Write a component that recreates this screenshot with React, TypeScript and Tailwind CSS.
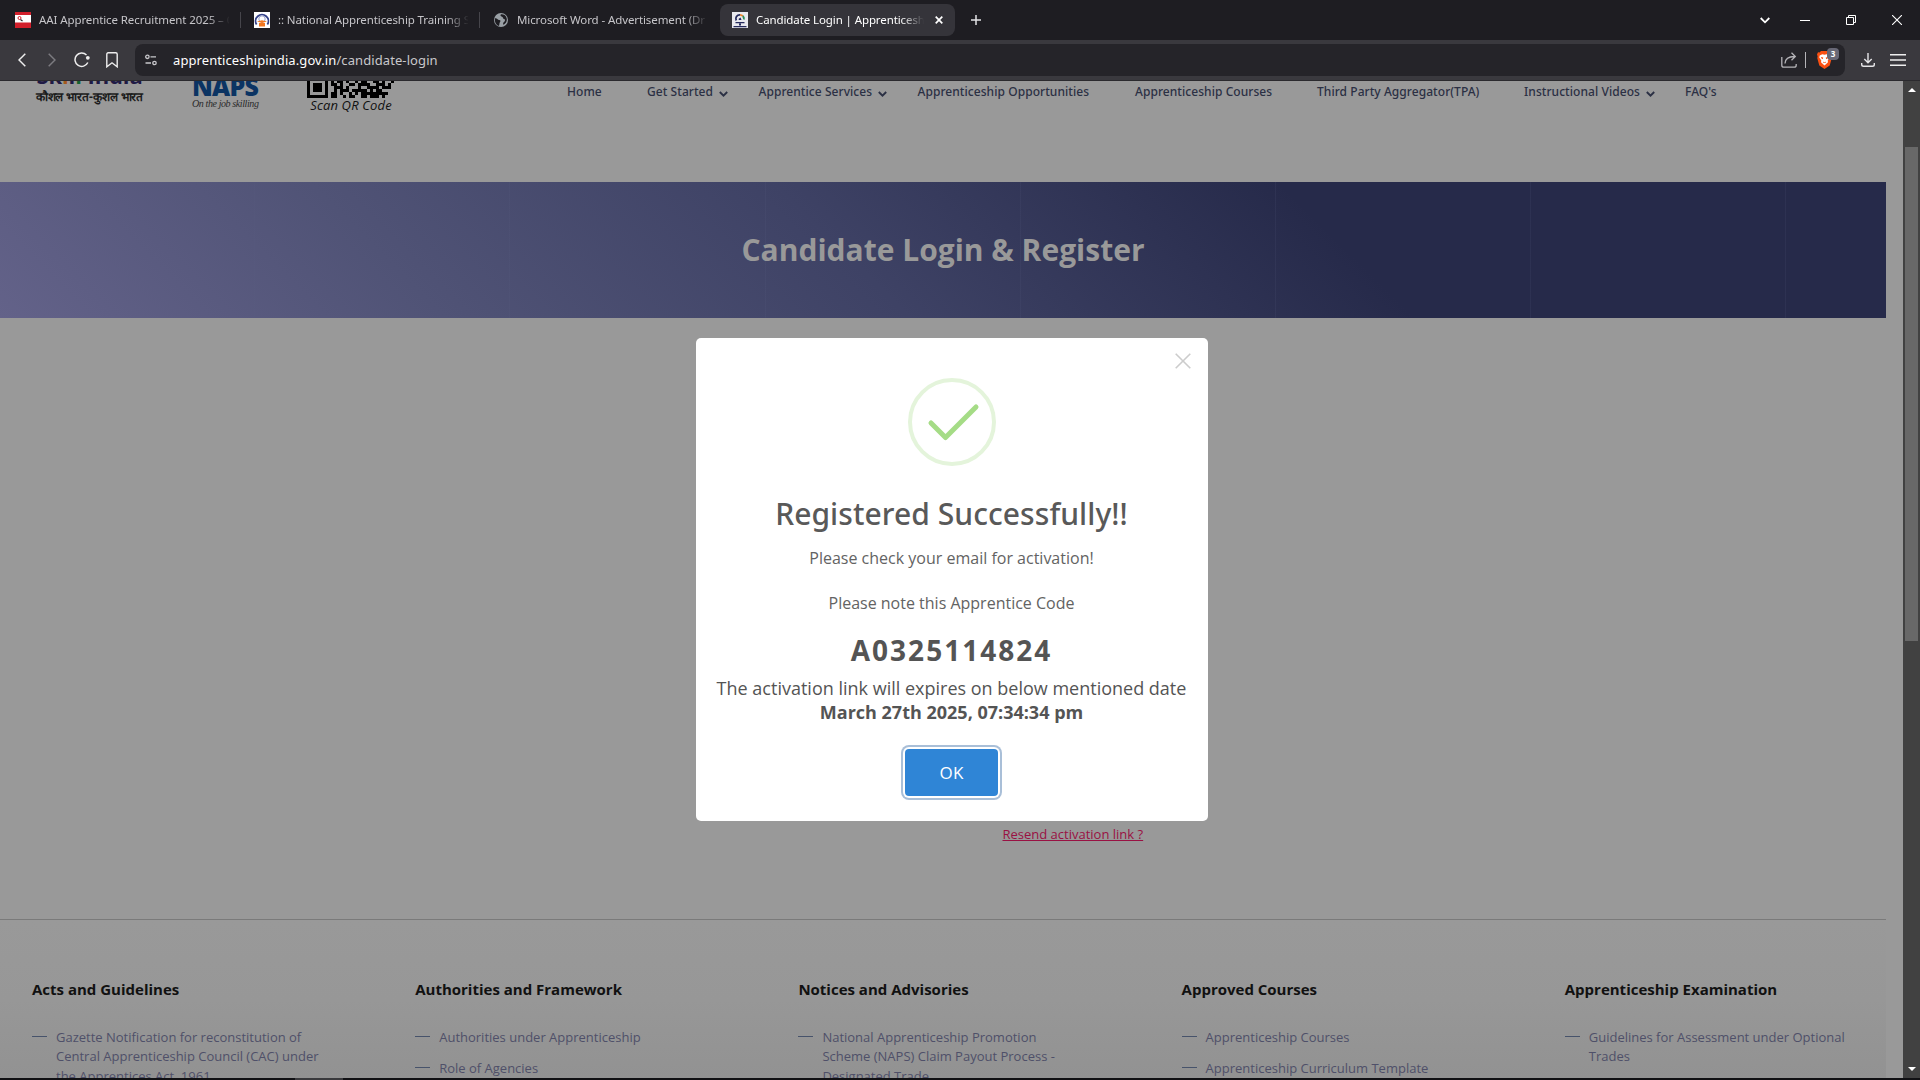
import React from 'react';
import type { ReactNode } from 'react';

const qrRows = [
  '10000010101101001011001101001',
  '10111010110100110111100111010',
  '10111010011101000100111101110',
  '10111010010111011111010110000',
  '10000010110100101011111111100',
  '11111110110010110011011101000',
];

function QrCode() {
  return (
    <svg width="88" height="17" viewBox="0 0 29.3 5.67" shapeRendering="crispEdges" className="block">
      {qrRows.map((row, y) =>
        row.split('').map((cell, x) =>
          cell === '1' ? <rect key={`${x}-${y}`} x={x} y={y - 0.33} width="1.02" height="1.02" fill="#000" /> : null,
        ),
      )}
    </svg>
  );
}

function Tab({ icon, title, children }: { icon: ReactNode; title: string; children?: ReactNode }) {
  return (
    <div className="flex h-8 w-[225px] shrink-0 items-center text-[#c6c5c9]">
      {icon}
      <span className="ml-2 w-[190px] overflow-hidden text-[11.5px] leading-4 tracking-[-0.1px] whitespace-nowrap [mask-image:linear-gradient(90deg,#000_168px,transparent_191px)]">
        {title}
      </span>
      {children}
    </div>
  );
}

function TabBar() {
  return (
    <div className="flex h-10 items-center bg-[#1e1d22] pl-[15px]">
      <Tab
        icon={
          <svg width="16" height="16" viewBox="0 0 16 16" className="shrink-0">
            <rect width="16" height="16" fill="#fff" />
            <rect width="16" height="3" fill="#d21f2b" />
            <rect y="10.5" width="16" height="5.5" fill="#d21f2b" />
            <circle cx="4.500" cy="6" r="1.500" fill="none" stroke="#d21f2b" strokeWidth="1" />
            <path d="M5.500 7.500l2 1.500" stroke="#222" strokeWidth="1.100" />
          </svg>
        }
        title="AAI Apprentice Recruitment 2025 – O"
      />
      <span className="h-4 w-px shrink-0 bg-[#46454b]" />
      <div className="w-[13px] shrink-0" />
      <Tab
        icon={
          <svg width="16" height="16" viewBox="0 0 16 16" className="shrink-0">
            <rect width="16" height="16" fill="#fff" />
            <path d="M2.6 12.5A6.4 6.4 0 1 1 13.4 12.5" fill="none" stroke="#34418a" strokeWidth="1.8" />
            <circle cx="8" cy="7" r="3.2" fill="none" stroke="#9aa3c9" />
            <path d="M3 9.5l5-1.3 5 1.3-5 1.6zM5 11h6v3.5H5z" fill="#f2761f" />
          </svg>
        }
        title=":: National Apprenticeship Training S"
      />
      <span className="h-4 w-px shrink-0 bg-[#46454b]" />
      <div className="w-[13px] shrink-0" />
      <Tab
        icon={
          <svg width="16" height="16" viewBox="0 0 16 16" className="shrink-0">
            <circle cx="8" cy="8" r="7" fill="#9aa0a6" />
            <path d="M2 6.2c2.2-.4 2.4 1.6 4.2 1.8 1.5.2 1.6 1.3.7 2.3-.7.8-.2 2.3-.9 3.6C3 13 1.400 10 2 6.200zM8 2.300c-1 1-.4 2.200 1 2.400 1.400.3.6 2 2.200 2.400 1.200.4 1 2.400-.2 3-1 .5-1 1.700-.7 2.600 2.900-1.300 4.300-4.500 3.100-7.300C12.600 3.300 10.300 2 8 2.300z" fill="#1e1d22" />
          </svg>
        }
        title="Microsoft Word - Advertisement (Dr"
      />
      <div className="ml-[2px] flex h-8 w-[235px] shrink-0 items-center rounded-lg bg-[#35343a] pl-3 text-white">
        <svg width="16" height="16" viewBox="0 0 16 16" className="shrink-0">
          <rect width="16" height="16" fill="#e9e9ee" />
          <path d="M4.200 8.500A4 4 0 0 1 8 2.800" fill="none" stroke="#252a5c" strokeWidth="1.800" />
          <path d="M8 2.800a4 4 0 0 1 2.800 1.200" fill="none" stroke="#e8822a" strokeWidth="1.800" />
          <path d="M10.800 4A4 4 0 0 1 11.900 7.500" fill="none" stroke="#2c8b57" strokeWidth="1.800" />
          <path d="M6.500 7l2-1.500L9.500 8H7zM3.500 10h9v1.200h-9zM7 11.500h2v2H7zM1.500 14h13v1.200h-13z" fill="#252a5c" />
        </svg>
        <span className="ml-2 w-[168px] overflow-hidden text-[11.5px] leading-4 tracking-[-0.1px] whitespace-nowrap [mask-image:linear-gradient(90deg,#000_145px,transparent_168px)]">
          Candidate Login | Apprenticesh
        </span>
        <svg width="8" height="8" viewBox="0 0 8 8" className="ml-[11px] shrink-0">
          <path d="M.7.7l6.600 6.600M7.300.7L.7 7.300" stroke="#fff" strokeWidth="1.700" />
        </svg>
      </div>
      <svg width="10" height="10" viewBox="0 0 10 10" className="ml-4 shrink-0">
        <path d="M5 0v10M0 5h10" stroke="#e4e4e6" strokeWidth="1.500" />
      </svg>
      <div className="ml-auto flex items-center pr-[18px]">
        <svg width="10" height="7" viewBox="0 0 10 7">
          <path d="M.7 1L5 5.300 9.300 1" fill="none" stroke="#fff" strokeWidth="1.800" />
        </svg>
        <span className="ml-[30px] h-px w-[10px] bg-white" />
        <svg width="10" height="10" viewBox="0 0 10 10" className="ml-9">
          <path d="M.5 2.500h7v7h-7zM2.500 2.500v-2h7v7h-2" fill="none" stroke="#fff" />
        </svg>
        <svg width="10" height="10" viewBox="0 0 10 10" className="ml-9">
          <path d="M0 0l10 10M10 0L0 10" stroke="#fff" strokeWidth="1.100" />
        </svg>
      </div>
    </div>
  );
}

function Toolbar() {
  return (
    <div className="flex h-[41px] items-start border-b border-[#2b2a2e] bg-[#3a393e] pt-1">
      <div className="flex h-8 w-[135px] shrink-0 items-center pl-[18px]">
        <svg width="8" height="14" viewBox="0 0 8 14">
          <path d="M7.300.7L1 7l6.300 6.300" fill="none" stroke="#eee" strokeWidth="1.500" />
        </svg>
        <svg width="8" height="14" viewBox="0 0 8 14" className="ml-[22px]">
          <path d="M.7.7L7 7 .7 13.300" fill="none" stroke="#7c7b80" strokeWidth="1.500" />
        </svg>
        <svg width="16" height="16" viewBox="0 0 16 16" className="ml-[18px]">
          <path d="M12.500 3A6.700 6.700 0 1 0 13.800 10.500" fill="none" stroke="#eee" strokeWidth="1.500" />
          <circle cx="13.800" cy="5.800" r="1.900" fill="#eee" />
        </svg>
        <svg width="12" height="16" viewBox="0 0 12 16" className="ml-4">
          <path d="M.8 2.200Q.8.800 2.200.800h7.600q1.400 0 1.400 1.400v12.600L6 10.800.8 14.800z" fill="none" stroke="#eee" strokeWidth="1.400" />
        </svg>
      </div>
      <div className="flex h-8 w-[1710px] shrink-0 items-center rounded-lg bg-[#252429] pl-[10px]">
        <svg width="12" height="12" viewBox="0 0 12 12" fill="none" stroke="#c8c7cb" strokeWidth="1.300">
          <circle cx="2.400" cy="2.800" r="1.700" />
          <path d="M5.500 2.800H11M.5 9h5.500" />
          <circle cx="9.500" cy="9" r="1.700" />
        </svg>
        <div className="ml-4 text-[13px] leading-5 tracking-[0.09px] text-white">
          apprenticeshipindia.gov.in<span className="text-[#c9c8cc]">/candidate-login</span>
        </div>
        <div className="ml-auto flex items-center pr-[6px]">
          <svg width="16" height="16" viewBox="0 0 16 16" fill="none" stroke="#b5b4b8" strokeWidth="1.300">
            <path d="M.8 5v8.200q0 2 2 2h10.400q2 0 2-2V12" />
            <path d="M4 11.500c.2-4.500 3.500-7 9.500-7M10.500.8l3.800 3.700-3.800 3.700" />
          </svg>
          <span className="ml-2 h-4 w-px bg-[#b5b4b8]" />
          <div className="relative ml-[11px] h-[18px] w-[22px]">
            <svg width="15" height="18" viewBox="0 0 15 18">
              <path d="M4 0h7l1.500 1.500L14 1.300l1 2.200-.6 1.700.3 2-2 7.300L7.500 18l-5.200-3.500-2-7.300.3-2L0 3.500l1-2.200 1.500.2z" fill="#fb5012" />
              <path d="M2.700 4.500l2.600-1.200 2.200.5 2.200-.5 2.600 1.200.4 2-2 3 .3 1.800-3.500 3.200L4 11.300l.3-1.800-2-3z" fill="#fff" />
              <path d="M4 6l2.200.6-.3 1.600L4.300 7.200zM11 6l-2.200.6.3 1.600 1.600-1zM6 10.500l1.500 1 1.500-1-.5 1.500h-2z" fill="#fb5012" />
            </svg>
            <span className="absolute top-[-3px] left-[10px] flex h-3 w-3 items-center justify-center rounded bg-[#686876] text-[8px] leading-none font-bold text-white">
              3
            </span>
          </div>
        </div>
      </div>
      <div className="flex h-8 items-center pl-4">
        <svg width="14" height="14" viewBox="0 0 14 14" fill="none" stroke="#e6e6e8" strokeWidth="1.400">
          <path d="M7 0v9.500M3.300 6L7 9.700 10.700 6M.7 10v1.500q0 1.800 1.800 1.800h9q1.800 0 1.800-1.800V10" />
        </svg>
        <svg width="16" height="12" viewBox="0 0 16 12" className="ml-[15px]">
          <path d="M0 .7h16M0 6h16M0 11.300h16" stroke="#eee" strokeWidth="1.400" />
        </svg>
      </div>
    </div>
  );
}

function NavItem({ label, menu }: { label: string; menu?: boolean }) {
  return (
    <a className="flex items-center font-medium whitespace-nowrap">
      {label}
      {menu && (
        <svg width="9" height="7" viewBox="0 0 9 7" className="mt-[4px] ml-[6px]">
          <path d="M.8 1l3.700 3.700L8.200 1" fill="none" stroke="#2b3044" strokeWidth="1.900" />
        </svg>
      )}
    </a>
  );
}

function SiteHeader() {
  return (
    <header className="flex h-[101px] shrink-0 items-start">
      <div className="flex w-[567px] shrink-0 items-start pl-[35px]">
        <div className="flex w-[109px] flex-col items-center">
          <div className="flex h-[3px] items-end overflow-hidden">
            <span className="-mb-[6px] text-[22px] leading-[30px] font-bold tracking-[-0.1px] whitespace-nowrap text-[#1f1a45]">
              Sk<span className="text-[#a55a1c]">i</span>l<span className="text-[#14632f]">l</span> India
            </span>
          </div>
          <div className="mt-[5px] font-['Open_Sans',sans-serif] text-[12px] leading-4 font-bold tracking-[-0.1px] whitespace-nowrap text-[#1c1c1c]">
            कौशल भारत-कुशल भारत
          </div>
        </div>
        <div className="ml-12 flex w-[67px] flex-col">
          <div className="flex h-[15px] items-end overflow-hidden">
            <span className="-mb-[6px] text-[25px] leading-8 font-extrabold tracking-[-0.8px] text-[#0b3463]">NAPS</span>
          </div>
          <div className="font-['Liberation_Serif',serif] text-[10px] leading-[15px] tracking-[-0.4px] whitespace-nowrap text-[#2a2a2a] italic">
            On the job skilling
          </div>
        </div>
        <div className="ml-[48px] flex w-[88px] flex-col items-center">
          <QrCode />
          <div className="-mt-[1px] text-[13px] leading-4 tracking-[0.15px] whitespace-nowrap text-[#111] italic">Scan QR Code</div>
        </div>
      </div>
      <nav className="grid grid-cols-[80px_111.500px_159px_217.500px_182px_207px_161px_60px] pt-[3px] font-['Noto_Sans','Open_Sans',sans-serif] text-[12px] leading-4 tracking-[0.06px] text-[#2b3044]">
        <NavItem label="Home" />
        <NavItem label="Get Started" menu />
        <NavItem label="Apprentice Services" menu />
        <NavItem label="Apprenticeship Opportunities" />
        <NavItem label="Apprenticeship Courses" />
        <NavItem label="Third Party Aggregator(TPA)" />
        <NavItem label="Instructional Videos" menu />
        <NavItem label="FAQ's" />
      </nav>
    </header>
  );
}

const footerColumns = [
  { title: 'Acts and Guidelines', links: [['Gazette Notification for reconstitution of', 'Central Apprenticeship Council (CAC) under', 'the Apprentices Act, 1961']] },
  { title: 'Authorities and Framework', links: [['Authorities under Apprenticeship'], ['Role of Agencies']] },
  { title: 'Notices and Advisories', links: [['National Apprenticeship Promotion', 'Scheme (NAPS) Claim Payout Process -', 'Designated Trade']] },
  { title: 'Approved Courses', links: [['Apprenticeship Courses'], ['Apprenticeship Curriculum Template']] },
  { title: 'Apprenticeship Examination', links: [['Guidelines for Assessment under Optional', 'Trades']] },
];

function Footer() {
  return (
    <footer className="flex h-[159px] w-[1886px] shrink-0 overflow-hidden border-t border-[#7a7a7a] bg-linear-to-b from-[#999] via-[#979797] to-[#929292] pt-[59px] pl-8">
      {footerColumns.map((column) => (
        <section key={column.title} className="w-[383.200px] shrink-0">
          <h3 className="text-[15px] leading-5 font-bold text-[#111]">{column.title}</h3>
          <ul className="mt-[28.500px] flex flex-col gap-[11.500px]">
            {column.links.map((lines) => (
              <li key={lines[0]} className="flex text-[13px] leading-[19.500px] text-[#4f5069]">
                <span className="mt-[8.500px] mr-[9px] h-px w-[15px] bg-[#47536b]" />
                <span>
                  {lines.map((line) => (
                    <span key={line} className="block whitespace-nowrap">
                      {line}
                    </span>
                  ))}
                </span>
              </li>
            ))}
          </ul>
        </section>
      ))}
    </footer>
  );
}

function SuccessDialog() {
  return (
    <div
      role="dialog"
      className="absolute top-[338px] left-[696px] flex h-[483px] w-[512px] flex-col items-center rounded-[5px] bg-white pt-10 pr-px text-[#545454]"
    >
      <svg width="16" height="16" viewBox="0 0 16 16" className="absolute top-[15px] right-[17px]">
        <path d="M.7.7l14.600 14.600M15.300.7L.7 15.300" stroke="#ccc" strokeWidth="1.600" />
      </svg>
      <svg width="88" height="88" viewBox="0 0 88 88" fill="none" className="ml-px shrink-0">
        <circle cx="44" cy="44" r="42" stroke="#e4f4db" strokeWidth="4" />
        <path d="M23 45l14.500 14.500L68 29" stroke="#a5dc86" strokeWidth="5" strokeLinecap="round" strokeLinejoin="round" />
      </svg>
      <h2 className="mt-[30px] font-['Noto_Sans','Open_Sans',sans-serif] text-[30px] leading-9 font-medium tracking-[0.07px] text-[#595959]">
        Registered Successfully!!
      </h2>
      <p className="mt-[14px] text-[16px] leading-6 text-[#636363]">Please check your email for activation!</p>
      <p className="mt-[21px] text-[16px] leading-6 text-[#636363]">Please note this Apprentice Code</p>
      <strong className="mt-[18px] text-[28px] leading-[34px] font-bold tracking-[2px]">A0325114824</strong>
      <p className="mt-[9px] text-[18px] leading-6 whitespace-nowrap">The activation link will expires on below mentioned date</p>
      <strong className="text-[18px] leading-6 font-bold">March 27th 2025, 07:34:34 pm</strong>
      <button className="mt-[25px] h-[47px] w-[93px] rounded-[4px] bg-[#2f85d6] text-[17px] leading-6 tracking-[0.3px] text-white shadow-[0_0_0_2px_#fff,0_0_0_4px_#a9bfd8]">
        OK
      </button>
    </div>
  );
}

function Scrollbar() {
  return (
    <div className="flex w-[17px] shrink-0 flex-col items-center bg-[#414141]">
      <svg width="8" height="4" viewBox="0 0 8 4" className="mt-[7px]">
        <path d="M4 0l4 4H0z" fill="#fff" />
      </svg>
      <div className="mt-[55px] h-[494px] w-[13px] bg-[#686868]" />
      <svg width="8" height="4" viewBox="0 0 8 4" className="mt-auto mb-[7px]">
        <path d="M0 0h8L4 4z" fill="#fff" />
      </svg>
    </div>
  );
}

export default function App() {
  return (
    <div className="relative flex h-[1080px] w-[1920px] flex-col overflow-hidden bg-[#999] font-['Open_Sans','Noto_Sans',sans-serif]">
      <div className="font-['Noto_Sans',sans-serif]">
        <TabBar />
        <Toolbar />
      </div>
      <div className="flex h-[997px] shrink-0">
        <div className="flex w-[1903px] shrink-0 flex-col overflow-hidden">
          <SiteHeader />
          <section className="h-[136px] w-[1886px] shrink-0 bg-[repeating-linear-gradient(90deg,transparent_0px,transparent_254.200px,rgba(90,95,130,0.14)_254.200px,rgba(90,95,130,0.14)_255.200px),linear-gradient(45deg,#636289_0%,#505376_22%,#3e4265_45%,#262a4a_70%)] pt-[50px]">
            <h1 className="text-center text-[30px] leading-9 font-bold text-[#999]">Candidate Login &amp; Register</h1>
          </section>
          <main className="flex flex-1 items-end pb-[75px] pl-[1002.500px]">
            <a className="text-[13px] leading-5 text-[#991143] underline">Resend activation link ?</a>
          </main>
          <Footer />
        </div>
        <Scrollbar />
      </div>
      <div className="flex h-[2px] shrink-0 bg-[#111114] pl-[295px]">
        <div className="w-12 bg-[#3a3a3d]" />
      </div>
      <SuccessDialog />
    </div>
  );
}
